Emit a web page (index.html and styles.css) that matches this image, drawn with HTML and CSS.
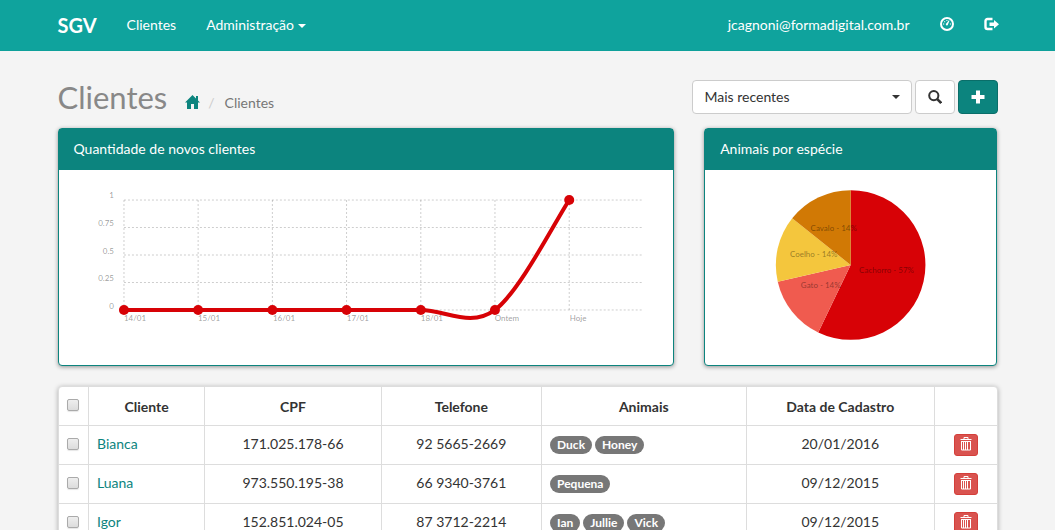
FILE: index.html
```html
<!DOCTYPE html>
<html lang="pt-BR">
<head>
<meta charset="utf-8">
<meta name="viewport" content="width=device-width, initial-scale=1">
<title>SGV - Clientes</title>
<link rel="stylesheet" href="styles.css">
</head>
<body>
<header class="navbar">
  <nav class="container navbar-inner">
    <a class="brand" href="#">SGV</a>
    <a class="nav-link" href="#">Clientes</a>
    <a class="nav-link" href="#">Administração <span class="caret"></span></a>
    <a class="nav-link push-right" href="#">jcagnoni@formadigital.com.br</a>
    <a class="nav-link" href="#" aria-label="Painel">
      <svg class="icon" viewBox="0 0 14 14"><circle cx="7" cy="7" r="6" fill="none" stroke="currentColor" stroke-width="2"/><path d="M6.500 6.300L8.900 3.300l.6.400-1.500 3.500a1.100 1.100 0 1 1-1.500-.900zM3 6.500h1.200v1H3zM4.100 4.200h1.100v1.100H4.100zM6.400 3h1v1.100h-1zM9.900 6.500H11v1H9.900z" fill="currentColor"/></svg>
    </a>
    <a class="nav-link" href="#" aria-label="Sair">
      <svg class="icon icon-wide" viewBox="0 0 15 14"><path d="M8.500 2H3.500a2 2 0 0 0-2 2v6a2 2 0 0 0 2 2h5" fill="none" stroke="currentColor" stroke-width="2.400"/><path d="M10 3l5 4.200-5 4.200V9H5.500V5.500H10z" fill="currentColor"/></svg>
    </a>
  </nav>
</header>
<main class="container">
  <div class="page-header">
    <h1>Clientes</h1>
    <nav class="breadcrumb" aria-label="Navegação">
      <a href="#" aria-label="Início"><svg class="icon icon-wide" viewBox="0 0 15 14"><path d="M7.500 0L11 3.400V1h2v4.400L15 7.600H13V14H9V9H6v5H2V7.600H0z" fill="currentColor"/></svg></a>
      <span class="sep">/</span>
      <span>Clientes</span>
    </nav>
    <form class="toolbar">
      <div class="select-wrap">
        <select class="select" aria-label="Ordenar"><option>Mais recentes</option></select>
        <span class="caret"></span>
      </div>
      <button class="btn" type="button" aria-label="Buscar"><svg class="icon" viewBox="0 0 14 14"><circle cx="5.800" cy="5.600" r="4.600" fill="none" stroke="currentColor" stroke-width="2"/><path d="M9 8.900l4.200 4.200" stroke="currentColor" stroke-width="2.600" fill="none"/></svg></button>
      <button class="btn btn-primary" type="button" aria-label="Adicionar"><svg class="icon" viewBox="0 0 14 14"><path d="M5 .5h4V5h4.500v4H9v4.500H5V9H.5V5H5z" fill="currentColor"/></svg></button>
    </form>
  </div>

  <div class="panels">
    <section class="panel">
      <h2 class="panel-heading">Quantidade de novos clientes</h2>
      <div class="panel-body">
        <svg class="chart" viewBox="0 0 585 160">
          <g class="grid">
            <path d="M50 15H569M50 42.500H569M50 70H569M50 97.500H569M50 125H569"/>
            <path d="M50 15V125M124.200 15V125M198.500 15V125M272.700 15V125M347 15V125M421.200 15V125M495.500 15V125"/>
          </g>
          <g class="label label-end">
            <text x="40" y="13">1</text><text x="40" y="41">0.75</text><text x="40" y="69">0.5</text><text x="40" y="96">0.25</text><text x="40" y="124">0</text>
          </g>
          <g class="label">
            <text x="50" y="136">14/01</text><text x="124" y="136">15/01</text><text x="199" y="136">16/01</text><text x="273" y="136">17/01</text><text x="347" y="136">18/01</text><text x="421" y="136">Ontem</text><text x="496" y="136">Hoje</text>
          </g>
          <path class="line" d="M50 125H347C371.700 125 396.500 143.300 421.200 125C446 106.700 483 33.300 495.500 15"/>
          <g class="points">
            <circle cx="50" cy="125" r="5"/><circle cx="124.200" cy="125" r="5"/><circle cx="198.500" cy="125" r="5"/><circle cx="272.700" cy="125" r="5"/><circle cx="347" cy="125" r="5"/><circle cx="421.200" cy="125" r="5"/><circle cx="495.500" cy="15" r="5"/>
          </g>
        </svg>
      </div>
    </section>
    <section class="panel">
      <h2 class="panel-heading">Animais por espécie</h2>
      <div class="panel-body">
        <svg class="chart" viewBox="0 0 262 160">
          <path fill="#d70206" d="M131 80V5A75 75 0 1 1 98.500 147.600z"/>
          <path fill="#f05b4f" d="M131 80L98.500 147.600A75 75 0 0 1 57.900 96.700z"/>
          <path fill="#f4c63d" d="M131 80L57.900 96.700A75 75 0 0 1 72.400 33.200z"/>
          <path fill="#d17905" d="M131 80L72.400 33.200A75 75 0 0 1 131 5z"/>
          <g class="label label-middle">
            <text x="167" y="88">Cachorro - 57%</text><text x="101" y="103">Gato - 14%</text><text x="94" y="72">Coelho - 14%</text><text x="114" y="46">Cavalo - 14%</text>
          </g>
        </svg>
      </div>
    </section>
  </div>

  <div class="table-card">
    <table class="table">
      <colgroup><col class="c-check"><col class="c-name"><col class="c-cpf"><col class="c-phone"><col class="c-pets"><col class="c-date"><col></colgroup>
      <thead>
        <tr><th><input class="check" type="checkbox" aria-label="Selecionar todos"></th><th>Cliente</th><th>CPF</th><th>Telefone</th><th>Animais</th><th>Data de Cadastro</th><th></th></tr>
      </thead>
      <tbody>
        <tr><td><input class="check" type="checkbox" aria-label="Selecionar Bianca"></td><td class="left"><a href="#">Bianca</a></td><td>171.025.178-66</td><td>92 5665-2669</td><td class="left"><div class="badges"><span class="badge">Duck</span><span class="badge">Honey</span></div></td><td>20/01/2016</td><td><button class="btn-del" type="button" aria-label="Excluir Bianca"><svg class="trash" viewBox="0 0 12 14"><use href="#trash"/></svg></button></td></tr>
        <tr><td><input class="check" type="checkbox" aria-label="Selecionar Luana"></td><td class="left"><a href="#">Luana</a></td><td>973.550.195-38</td><td>66 9340-3761</td><td class="left"><div class="badges"><span class="badge">Pequena</span></div></td><td>09/12/2015</td><td><button class="btn-del" type="button" aria-label="Excluir Luana"><svg class="trash" viewBox="0 0 12 14"><use href="#trash"/></svg></button></td></tr>
        <tr><td><input class="check" type="checkbox" aria-label="Selecionar Igor"></td><td class="left"><a href="#">Igor</a></td><td>152.851.024-05</td><td>87 3712-2214</td><td class="left"><div class="badges"><span class="badge">Ian</span><span class="badge">Jullie</span><span class="badge">Vick</span></div></td><td>09/12/2015</td><td><button class="btn-del" type="button" aria-label="Excluir Igor"><svg class="trash" viewBox="0 0 12 14"><use href="#trash"/></svg></button></td></tr>
      </tbody>
    </table>
  </div>
</main>
<svg class="defs" aria-hidden="true"><symbol id="trash" viewBox="0 0 12 14"><path d="M4 2.500V.5h4v2M.5 2.500h11M1.500 4v9h9V4M1 4.500h10M3.500 5v8M5.500 5v8M7.500 5v8" fill="none" stroke="currentColor"/></symbol></svg>
</body>
</html>
```
FILE: styles.css
```css
* { box-sizing: border-box; }
html { scrollbar-width: none; }
body {
  margin: 0;
  background: #f4f4f4;
  color: #333;
  font: 14px/20px Lato, sans-serif;
}
a { color: #0c847e; text-decoration: none; }
.container { width: 100%; max-width: 970px; margin: 0 auto; padding: 0 15px; }
.icon { display: block; width: 14px; height: 14px; }
.icon-wide { width: 15px; }
.caret {
  display: inline-block;
  border: 4px solid transparent;
  border-top-color: currentColor;
  border-bottom: 0;
  vertical-align: middle;
}
.defs { position: absolute; width: 0; height: 0; }

.navbar { background: #0fa39d; border-bottom: 1px solid #0ea09a; }
.navbar-inner { display: flex; align-items: center; height: 50px; gap: 30px; }
.navbar a { color: #fff; }
.brand { font-size: 20px; font-weight: 700; }
.push-right { margin-left: auto; }
.navbar-inner .icon { margin-bottom: 2px; }
.navbar-inner .icon-wide { margin-right: -1px; }

.page-header { display: flex; align-items: flex-start; padding: 29px 0 14px; }
h1 { margin: 0; color: #888; font-size: 31px; font-weight: 400; line-height: 34px; }
.breadcrumb { display: flex; align-items: center; padding: 13px 0 0 18px; color: #777; }
.breadcrumb .icon { margin-bottom: 2px; }
.breadcrumb .sep { padding: 0 10px 0 8px; color: #ccc; }
.toolbar { display: flex; gap: 3px; margin-left: auto; }
.select-wrap { position: relative; width: 220px; color: #333; }
.select-wrap .caret { position: absolute; right: 12px; top: 15px; pointer-events: none; }
.select, .btn {
  height: 34px;
  border: 1px solid #ccc;
  border-radius: 4px;
  background: #fff;
  color: #333;
}
.select { width: 100%; padding: 0 12px; appearance: none; font: inherit; }
.btn { display: grid; place-items: center; width: 40px; padding: 0; }
.btn-primary { border-color: #0a6e69; background: #0c847e; color: #fff; }

.panels { display: grid; grid-template-columns: minmax(0, 616fr) minmax(0, 293fr); gap: 30px; margin-bottom: 20px; }
.panel {
  border: 1px solid #0c847e;
  border-radius: 4px;
  background: #fff;
  box-shadow: 0 1px 4px rgba(0, 0, 0, .4);
}
.panel-heading {
  margin: 0;
  padding: 10px 15px 11px;
  background: #0c847e;
  color: #fff;
  font-size: 14px;
  font-weight: 400;
  line-height: 20px;
}
.panel-body { padding: 15px 15px 20px; }
.chart { display: block; width: 100%; height: 160px; overflow: visible; }
.grid { fill: none; stroke: rgba(0, 0, 0, .2); stroke-dasharray: 2px; }
.label { fill: rgba(0, 0, 0, .4); font-size: 8px; }
.label-end { text-anchor: end; }
.label-middle { text-anchor: middle; }
.line { fill: none; stroke: #d70206; stroke-width: 4px; }
.points { fill: #d70206; }

.table-card {
  overflow: hidden;
  border: 1px solid #ddd;
  border-radius: 4px;
  background: #fff;
  box-shadow: 0 1px 5px rgba(0, 0, 0, .3);
}
.table { width: 100%; border-collapse: collapse; table-layout: fixed; }
.c-check { width: 30px; }
.c-name { width: 12.400%; }
.c-cpf { width: 18.800%; }
.c-phone { width: 17.100%; }
.c-pets { width: 21.800%; }
.c-date { width: 20.100%; }
th, td { height: 39px; padding: 0 8px; border: 1px solid #ddd; text-align: center; }
.table tr:first-child th { border-top: 0; }
th { height: 38px; padding-top: 3px; }
td { padding-bottom: 2px; }
th:first-child, td:first-child { border-left: 0; }
th:last-child, td:last-child { border-right: 0; }
.left { text-align: left; }
.check {
  display: block;
  width: 12px;
  height: 12px;
  margin: 0 auto;
  appearance: none;
  border: 1px solid #aaa;
  border-radius: 2px;
  background: linear-gradient(#eee, #dcdcdc);
  box-shadow: 0 1px 1px rgba(0, 0, 0, .1);
}
th .check { margin-bottom: 5px; }
.badges { display: flex; gap: 3px; padding-top: 2px; }
.badge {
  padding: 3px 7px;
  border-radius: 9px;
  background: #777;
  color: #fff;
  font-size: 12px;
  font-weight: 700;
  line-height: 12px;
}
.btn-del {
  display: block;
  width: 24px;
  height: 22px;
  margin: 2px auto 0;
  padding: 0 0 2px;
  border: 1px solid #d43f3a;
  border-radius: 3px;
  background: #d9534f;
  color: #fff;
}
.trash { display: block; width: 12px; height: 14px; margin: 0 auto; }
```
